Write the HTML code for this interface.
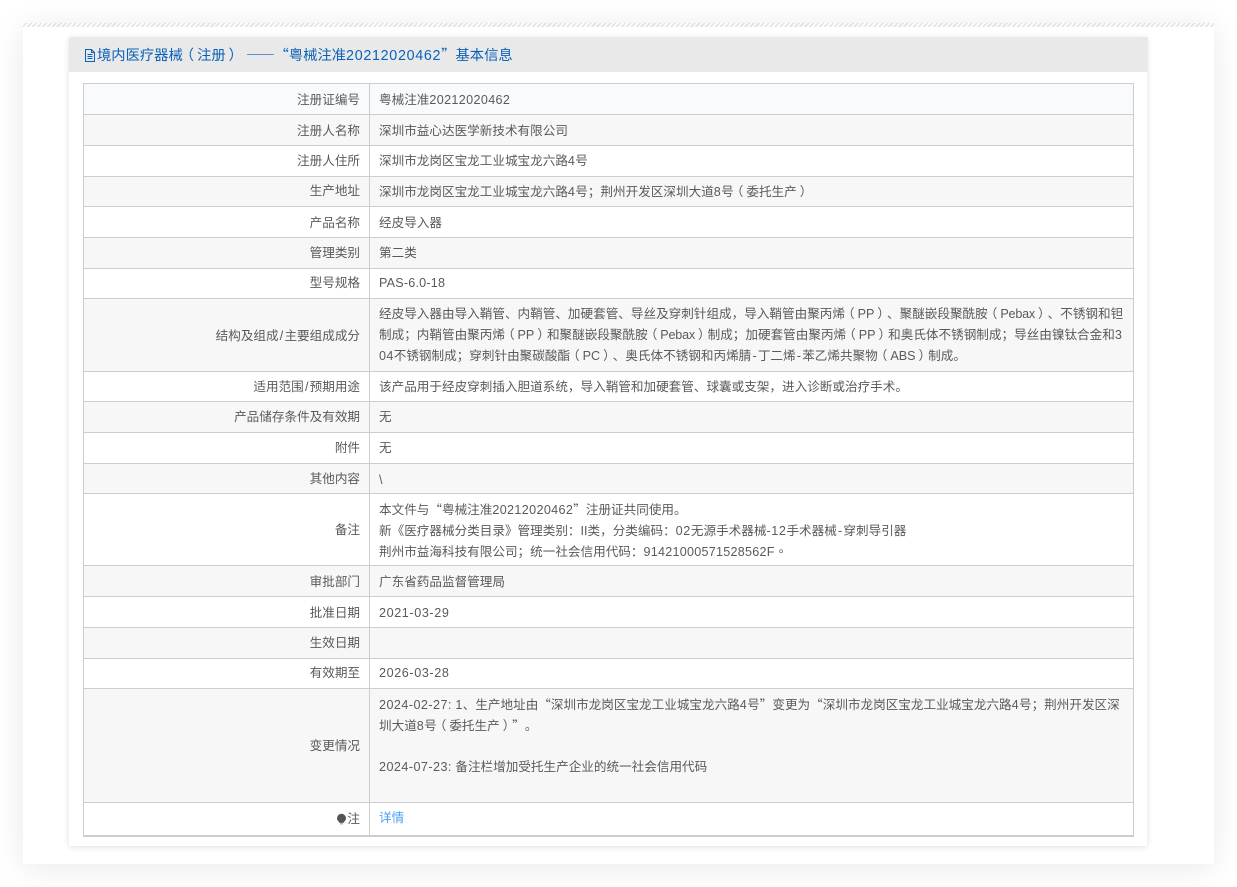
<!DOCTYPE html>
<html lang="zh-CN">
<head>
<meta charset="utf-8">
<title>境内医疗器械（注册）</title>
<style>
html,body{margin:0;padding:0;background:#fff;width:1237px;height:887px;overflow:hidden}
body{position:relative;font-family:"Liberation Sans","Noto Sans CJK SC",sans-serif;color:#5a5a5a;text-spacing-trim:space-all}
.outer{position:absolute;left:23px;top:23px;width:1191px;height:841px;background:#fff;box-shadow:0 4px 30px rgba(0,0,0,.09)}
.hatch{position:absolute;left:0;top:0;width:100%;height:4px;background:repeating-linear-gradient(135deg,#fff 0,#fff 1.6px,#e4e4e4 1.6px,#e4e4e4 3.5px)}
.inner{position:absolute;left:69px;top:37px;width:1078px;height:809px;background:#fff;box-shadow:0 1px 6px rgba(0,0,0,.13)}
.head{position:absolute;left:69px;top:37px;width:1079px;height:35px;background:#e9e9ea;line-height:36px;font-size:14.3px;color:#0a62b8;white-space:nowrap}
.head>span{position:absolute;left:28px;top:1px}
.head svg{position:absolute;left:15px;top:11.500px}
.head .n{letter-spacing:.7px}
.head .d2{margin-left:6px}
.tb{position:absolute;left:83px;top:83px;width:1049px;height:751px;border:1px solid #cdcdd0;border-bottom-width:2px;background:#fff}
.r{position:absolute;left:0;width:1049px;box-sizing:border-box;border-bottom:1px solid #cdcdcd;font-size:12.6px;line-height:20.8px}
.r:last-child{border-bottom:0}
.g{background:#f7f7f8}
.b{background:#f9fafc}
.l{position:absolute;left:0;top:0;bottom:0;width:285px;box-sizing:content-box;border-right:1px solid #cdcdcd;display:flex;align-items:center;justify-content:flex-end}
.l i{font-style:normal;margin-right:9px;white-space:nowrap}
.v{position:absolute;left:295px;width:746px;top:5px;margin:0;white-space:nowrap}
.dn .v{top:6px}
.dn .l i{position:relative;top:1px}
.v a{color:#4ba0f5;text-decoration:none}
.c,.o,.x{font-family:"Noto Sans CJK SC",sans-serif;line-height:0}
.t{font-family:"Noto Sans CJK TC",sans-serif;line-height:0}
.o{position:relative;left:-3px}
.x{position:relative;left:3px}
.n{letter-spacing:.35px}
.m{letter-spacing:.6px}
.m2{letter-spacing:.45px}
.s{margin:0 1.2px}
.e{letter-spacing:-.2px}
</style>
</head>
<body>
<div class="outer"><div class="hatch"></div></div>
<div class="inner"></div>
<div class="head">
<svg width="12" height="13" viewBox="0 0 12 13"><path d="M1.500.5h6l3 3v9h-9zM7.500.5v3h3M3.500 5.500h5M3.500 7.500h5M3.500 9.500h5" fill="none" stroke="#0a62b8" stroke-width="1"/></svg>
<span>境内医疗器械<span class="o">（</span>注册<span class="x">）</span><span class="c d2">——“</span>粤械注准<span class="n">20212020462</span><span class="c">”</span>基本信息</span>
</div>
<div class="tb">
<div class="r b dn" style="top:0;height:31px"><div class="l"><i>注册证编号</i></div><p class="v">粤械注准<span class="n">20212020462</span></p></div>
<div class="r g dn" style="top:31px;height:31px"><div class="l"><i>注册人名称</i></div><p class="v">深圳市益心达医学新技术有限公司</p></div>
<div class="r" style="top:62px;height:31px"><div class="l"><i>注册人住所</i></div><p class="v">深圳市龙岗区宝龙工业城宝龙六路<span class="n">4</span>号</p></div>
<div class="r g" style="top:93px;height:30px"><div class="l"><i>生产地址</i></div><p class="v">深圳市龙岗区宝龙工业城宝龙六路<span class="n">4</span>号<span class="t">；</span>荆州开发区深圳大道<span class="n">8</span>号<span class="o">（</span>委托生产<span class="x">）</span></p></div>
<div class="r dn" style="top:123px;height:31px"><div class="l"><i>产品名称</i></div><p class="v">经皮导入器</p></div>
<div class="r g" style="top:154px;height:31px"><div class="l"><i>管理类别</i></div><p class="v">第二类</p></div>
<div class="r" style="top:185px;height:30px"><div class="l"><i>型号规格</i></div><p class="v" style="top:4px"><span style="letter-spacing:.2px">PAS-6.0-18</span></p></div>
<div class="r g dn" style="top:215px;height:73px"><div class="l"><i>结构及组成<span class="s">/</span>主要组成成分</i></div><p class="v" style="top:5px">经皮导入器由导入鞘管、内鞘管、加硬套管、导丝及穿刺针组成<span class="t">，</span>导入鞘管由聚丙烯<span class="o">（</span>PP<span class="x">）</span><span class="c">、</span>聚醚嵌段聚酰胺<span class="o">（</span><span class="e">Pebax</span><span class="x">）</span><span class="c">、</span>不锈钢和钽<br>制成<span class="t">；</span>内鞘管由聚丙烯<span class="o">（</span>PP<span class="x">）</span>和聚醚嵌段聚酰胺<span class="o">（</span><span class="e">Pebax</span><span class="x">）</span>制成<span class="t">；</span>加硬套管由聚丙烯<span class="o">（</span>PP<span class="x">）</span>和奥氏体不锈钢制成<span class="t">；</span>导丝由镍钛合金和<span class="n">3</span><br><span class="n">04</span>不锈钢制成<span class="t">；</span>穿刺针由聚碳酸酯<span class="o">（</span>PC<span class="x">）</span><span class="c">、</span>奥氏体不锈钢和丙烯腈<span class="s">-</span>丁二烯<span class="s">-</span>苯乙烯共聚物<span class="o">（</span>ABS<span class="x">）</span>制成<span class="t">。</span></p></div>
<div class="r" style="top:288px;height:30px"><div class="l"><i style="position:relative;top:1px">适用范围<span class="s">/</span>预期用途</i></div><p class="v">该产品用于经皮穿刺插入胆道系统<span class="t">，</span>导入鞘管和加硬套管、球囊或支架<span class="t">，</span>进入诊断或治疗手术<span class="t">。</span></p></div>
<div class="r g" style="top:318px;height:31px"><div class="l"><i>产品储存条件及有效期</i></div><p class="v">无</p></div>
<div class="r" style="top:349px;height:31px"><div class="l"><i>附件</i></div><p class="v">无</p></div>
<div class="r g dn" style="top:380px;height:30px"><div class="l"><i>其他内容</i></div><p class="v">\</p></div>
<div class="r dn" style="top:410px;height:72px"><div class="l"><i>备注</i></div><p class="v">本文件与<span class="c">“</span>粤械注准<span class="n">20212020462</span><span class="c">”</span>注册证共同使用<span class="t">。</span><br>新《医疗器械分类目录》管理类别<span class="t">：</span>II类<span class="t">，</span>分类编码<span class="t">：</span><span class="m">02</span>无源手术器械<span class="m">-12</span>手术器械<span class="s">-</span>穿刺导引器<br>荆州市益海科技有限公司<span class="t">；</span>统一社会信用代码<span class="t">：</span><span style="letter-spacing:.25px">91421000571528562F</span><span class="t">。</span></p></div>
<div class="r g dn" style="top:482px;height:31px"><div class="l"><i>审批部门</i></div><p class="v">广东省药品监督管理局</p></div>
<div class="r dn" style="top:513px;height:31px"><div class="l"><i>批准日期</i></div><p class="v"><span class="m">2021-03-29</span></p></div>
<div class="r g" style="top:544px;height:31px"><div class="l"><i>生效日期</i></div><p class="v"></p></div>
<div class="r" style="top:575px;height:30px"><div class="l"><i>有效期至</i></div><p class="v" style="top:4px"><span class="m">2026-03-28</span></p></div>
<div class="r g dn" style="top:605px;height:114px"><div class="l"><i>变更情况</i></div><p class="v"><span class="m2">2024-02-27:</span> <span class="n">1</span>、生产地址由<span class="c">“</span>深圳市龙岗区宝龙工业城宝龙六路<span class="n">4</span>号<span class="c">”</span>变更为<span class="c">“</span>深圳市龙岗区宝龙工业城宝龙六路<span class="n">4</span>号<span class="t">；</span>荆州开发区深<br>圳大道<span class="n">8</span>号<span class="o">（</span>委托生产<span class="x">）</span><span class="c">”</span><span class="t">。</span><br><br><span class="m2">2024-07-23:</span> 备注栏增加受托生产企业的统一社会信用代码</p></div>
<div class="r" style="top:719px;height:32px"><div class="l"><i style="display:flex;align-items:center"><svg width="11" height="12" viewBox="0 0 11 12"><path d="M5.500.8a4.500 4.500 0 0 1 4.500 4.500c0 2-1.700 3.200-2.600 4.600H3.600C2.700 8.500 1 7.300 1 5.300A4.500 4.500 0 0 1 5.500.8zM4.300 10.500h2.400v.8H4.300z" fill="#555"/></svg>注</i></div><p class="v"><a href="#">详情</a></p></div>
</div>
</body>
</html>
